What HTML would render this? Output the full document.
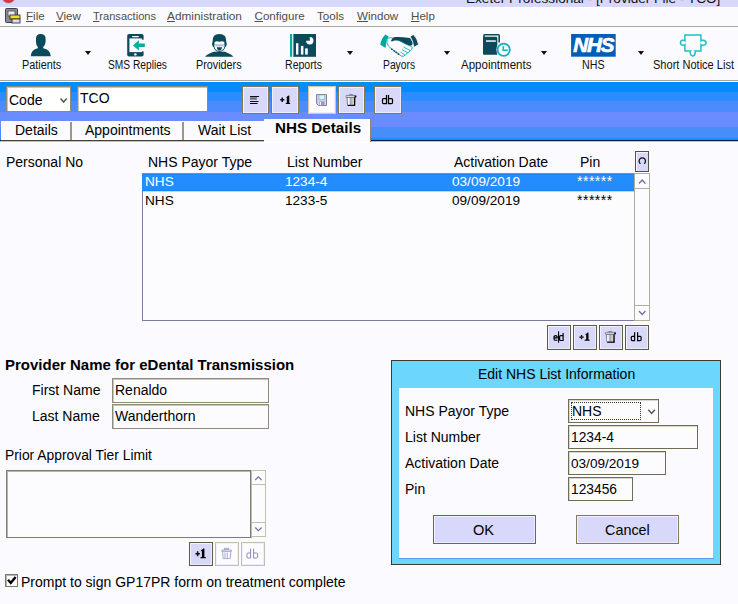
<!DOCTYPE html>
<html><head><meta charset="utf-8">
<style>
*{box-sizing:border-box}
html,body{margin:0;padding:0}
body{width:738px;height:604px;overflow:hidden;position:relative;background:#FAFAFF;font-family:"Liberation Sans",sans-serif;color:#000}
.a{position:absolute}
.t{position:absolute;white-space:nowrap;font-size:14px;line-height:14px}
.m{position:absolute;white-space:nowrap;font-size:11.6px;line-height:11px;color:#505044}
.m u{text-decoration:underline;text-underline-offset:1px;text-decoration-thickness:1px}
.lbl{position:absolute;white-space:nowrap;font-size:12px;line-height:12px;color:#111}
.tri{position:absolute;width:0;height:0;border-left:3.5px solid transparent;border-right:3.5px solid transparent;border-top:4px solid #111}
.btn{position:absolute;background:#D8D8FA;border:1px solid #857A58;box-shadow:inset 1px 1px 0 #F0F0FF,inset -1px -1px 0 #ECECFF}
.fld{position:absolute;background:#FCFCFF;border:1px solid #8E8C78;box-shadow:inset 1px 1px 0 #C8C6B8}
</style></head><body>

<!-- title bar -->
<div class="a" style="left:0;top:0;width:738px;height:7px;background:#D8D8FE"></div><div class="a" style="left:0;top:7px;width:738px;height:1px;background:#FFFFFF"></div>
<div class="a" style="left:2px;top:-10px;width:13px;height:13px;border-radius:50%;background:#D83838;box-shadow:0 0 0 0.8px #A0C8D0"></div>
<div class="a" style="left:0;top:0;width:738px;height:7px;overflow:hidden"><div class="t" style="left:466px;top:-8px;font-size:13.6px;line-height:13.6px;color:#111">Exeter Professional - [Provider File - TCO]</div></div>

<!-- menu bar -->
<div class="a" style="left:0;top:26px;width:738px;height:1px;background:#A8A898"></div>
<div class="m" style="left:26px;top:10px"><u>F</u>ile</div>
<div class="m" style="left:56px;top:10px"><u>V</u>iew</div>
<div class="m" style="left:92.5px;top:10px;transform:scaleX(0.955);transform-origin:0 0"><u>T</u>ransactions</div>
<div class="m" style="left:167px;top:10px;transform:scaleX(1.02);transform-origin:0 0"><u>A</u>dministration</div>
<div class="m" style="left:254.5px;top:10px"><u>C</u>onfigure</div>
<div class="m" style="left:317px;top:10px">T<u>o</u>ols</div>
<div class="m" style="left:357px;top:10px"><u>W</u>indow</div>
<div class="m" style="left:411px;top:10px"><u>H</u>elp</div>

<!-- toolbar labels -->
<div class="lbl" style="left:22px;top:59px;transform:scaleX(0.905);transform-origin:0 0">Patients</div>
<div class="lbl" style="left:108px;top:59px;transform:scaleX(0.85);transform-origin:0 0">SMS Replies</div>
<div class="lbl" style="left:196px;top:59px;transform:scaleX(0.9);transform-origin:0 0">Providers</div>
<div class="lbl" style="left:285px;top:59px;transform:scaleX(0.88);transform-origin:0 0">Reports</div>
<div class="lbl" style="left:383px;top:59px;transform:scaleX(0.86);transform-origin:0 0">Payors</div>
<div class="lbl" style="left:461px;top:59px;transform:scaleX(0.96);transform-origin:0 0">Appointments</div>
<div class="lbl" style="left:582px;top:59px;transform:scaleX(0.89);transform-origin:0 0">NHS</div>
<div class="lbl" style="left:653px;top:59px;transform:scaleX(0.92);transform-origin:0 0">Short Notice List</div>
<div class="tri" style="left:85px;top:51px"></div>
<div class="tri" style="left:347px;top:51px"></div>
<div class="tri" style="left:444px;top:51px"></div>
<div class="tri" style="left:541px;top:51px"></div>
<div class="tri" style="left:638px;top:51px"></div>

<div class="a" style="left:0;top:80px;width:738px;height:1px;background:#A8A898"></div>

<!-- blue band -->
<div class="a" style="left:0;top:82px;width:738px;height:58px;background:linear-gradient(#008CFF 0,#008CFF 10px,#2A8CFF 10px,#2A8CFF 19px,#4A8CFC 19px,#4A8CFC 30px,#6B8CFF 30px,#6B8CFF 45px,#478EFC 45px,#478EFC 56px,#1A8CFF 56px,#1A8CFF 58px)"></div>
<div class="a" style="left:0;top:140px;width:738px;height:1px;background:#081838"></div><div class="a" style="left:0;top:141px;width:738px;height:1px;background:#C4C0B4"></div><div class="a" style="left:0;top:142px;width:738px;height:1px;background:#FFFFFF"></div>

<!-- code combo -->
<div class="fld" style="left:6px;top:86px;width:65px;height:26px;background:#fff"></div>
<div class="t" style="left:9px;top:93px">Code</div>
<div class="fld" style="left:77px;top:86px;width:131px;height:26px;background:#fff"></div>
<div class="t" style="left:80px;top:91px">TCO</div>

<div class="btn" style="left:242px;top:86px;width:27px;height:28px"></div>
<div class="btn" style="left:271px;top:86px;width:28px;height:28px"></div>
<div class="btn" style="left:308px;top:86px;width:28px;height:28px;background:#FCFCFF;border-color:#D8C8A8"></div>
<div class="btn" style="left:338px;top:86px;width:27px;height:28px"></div>
<div class="btn" style="left:374px;top:86px;width:28px;height:28px"></div>

<!-- tabs -->
<div class="a" style="left:1px;top:121px;width:264px;height:20px;background:#FAFAFF;border-bottom:1px solid #404040;box-shadow:inset 0 -1px 0 #fff"></div>
<div class="a" style="left:70px;top:122px;width:2px;height:18px;background:#9A9A84"></div>
<div class="a" style="left:182px;top:122px;width:2px;height:18px;background:#9A9A84"></div>
<div class="t" style="left:15px;top:123px">Details</div>
<div class="t" style="left:85px;top:123px">Appointments</div>
<div class="t" style="left:198px;top:123px">Wait List</div>
<div class="a" style="left:264px;top:119px;width:107px;height:23px;background:#FAFAFF;border-right:1px solid #8A8670"></div>
<div class="t" style="left:275px;top:120px;font-weight:bold;font-size:15.2px;line-height:15px">NHS Details</div>

<!-- content -->
<div class="t" style="left:6px;top:155px">Personal No</div>
<div class="t" style="left:148px;top:155px">NHS Payor Type</div>
<div class="t" style="left:287px;top:155px">List Number</div>
<div class="t" style="left:454px;top:155px">Activation Date</div>
<div class="t" style="left:580px;top:155px">Pin</div>
<div class="btn" style="left:635px;top:151px;width:14px;height:21px;border-color:#55543C;box-shadow:inset 1px 1px 0 #F4F4FF"></div>

<div class="a" style="left:142px;top:173px;width:493px;height:148px;border:1px solid #7C7CA0;border-top-color:#8A8A98;border-right:none;background:#FCFCFF"></div>
<div class="a" style="left:142px;top:174px;width:492px;height:17px;background:#238DFF;border-top:1px solid #1888FA;border-bottom:1px solid #1484F6"></div><div class="a" style="left:143px;top:191px;width:491px;height:1px;background:#B8D8FF"></div>
<div class="t" style="font-size:13.6px;left:145px;top:175px;color:#fff">NHS</div>
<div class="t" style="font-size:13.6px;left:285px;top:175px;color:#fff">1234-4</div>
<div class="t" style="font-size:13.6px;left:452px;top:175px;color:#fff">03/09/2019</div>
<div class="t" style="left:577px;top:174px;color:#fff;font-size:14px;letter-spacing:0.5px">******</div>
<div class="t" style="font-size:13.6px;left:145px;top:194px">NHS</div>
<div class="t" style="font-size:13.6px;left:285px;top:194px">1233-5</div>
<div class="t" style="font-size:13.6px;left:452px;top:194px">09/09/2019</div>
<div class="t" style="left:577px;top:193px;font-size:14px;letter-spacing:0.5px">******</div>
<div class="a" style="left:634px;top:173px;width:16px;height:148px;border:1px solid #B0AE9C;background:#FCFCFF"></div><div class="a" style="left:635px;top:188px;width:14px;height:1px;background:#B0AE9C"></div><div class="a" style="left:635px;top:305px;width:14px;height:1px;background:#B0AE9C"></div>

<div class="btn" style="left:547px;top:325px;width:24px;height:25px;border-color:#5E5C44"></div>
<div class="btn" style="left:573px;top:325px;width:24px;height:25px;border-color:#5E5C44"></div>
<div class="btn" style="left:599px;top:325px;width:24px;height:25px;border-color:#5E5C44"></div>
<div class="btn" style="left:625px;top:325px;width:24px;height:25px;border-color:#5E5C44"></div>

<div class="t" style="left:5px;top:357px;font-weight:bold;font-size:15px;line-height:15px">Provider Name for eDental Transmission</div>
<div class="t" style="left:32px;top:383px">First Name</div>
<div class="t" style="left:32px;top:409px">Last Name</div>
<div class="fld" style="left:112px;top:378px;width:157px;height:25px"></div>
<div class="fld" style="left:112px;top:404px;width:157px;height:25px"></div>
<div class="t" style="left:115px;top:383px">Renaldo</div>
<div class="t" style="left:115px;top:409px">Wanderthorn</div>

<div class="t" style="left:5px;top:448px;font-size:13.85px">Prior Approval Tier Limit</div>
<div class="fld" style="left:6px;top:470px;width:245px;height:68px;border-color:#7E7E6C;box-shadow:inset 1px 1px 0 #B8B8A8,1px 0 0 #A8A898"></div>
<div class="a" style="left:251px;top:470px;width:15px;height:67px;border:1px solid #C0BEAE;background:#FCFCFF"></div><div class="a" style="left:252px;top:484px;width:13px;height:1px;background:#C0BEAE"></div><div class="a" style="left:252px;top:522px;width:13px;height:1px;background:#C0BEAE"></div>
<div class="btn" style="left:189px;top:542px;width:24px;height:24px;border-color:#5E5C44"></div>
<div class="btn" style="left:215px;top:542px;width:24px;height:24px;background:#FCFCFF;border-color:#C0C0B0"></div>
<div class="btn" style="left:241px;top:542px;width:24px;height:24px;background:#FCFCFF;border-color:#C0C0B0"></div>

<div class="a" style="left:5px;top:574px;width:13px;height:13px;border:1px solid #7A7A6A;box-shadow:inset 1px 1px 0 #B8B8A8;background:#FCFCFF"></div>
<div class="t" style="left:21px;top:575px;font-size:14px">Prompt to sign GP17PR form on treatment complete</div>

<!-- dialog -->
<div class="a" style="left:391px;top:360px;width:330px;height:205px;background:#6DD6FD;border:1px solid #3A3A2A"></div>
<div class="a" style="left:399px;top:388px;width:314px;height:170px;background:#FAFAFF;box-shadow:0 -1px 0 #90C8FF"></div><div class="a" style="left:399px;top:558px;width:315px;height:1px;background:#5A9CF8"></div>
<div class="t" style="left:478px;top:367px">Edit NHS List Information</div>
<div class="t" style="left:405px;top:404px">NHS Payor Type</div>
<div class="t" style="left:405px;top:430px">List Number</div>
<div class="t" style="left:405px;top:456px">Activation Date</div>
<div class="t" style="left:405px;top:482px">Pin</div>
<div class="fld" style="left:568px;top:399px;width:91px;height:24px;border-color:#6E6C54;box-shadow:inset 1px 1px 0 #D8D8D0"></div>
<div class="t" style="left:572px;top:404px">NHS</div><div class="a" style="left:571px;top:402px;width:70px;height:18px;border:1px dotted #333"></div>
<div class="fld" style="left:568px;top:425px;width:130px;height:24px;border-color:#6E6C54;box-shadow:inset 1px 1px 0 #D8D8D0"></div>
<div class="t" style="left:571px;top:431px;font-size:13.8px">1234-4</div>
<div class="fld" style="left:568px;top:451px;width:98px;height:24px;border-color:#6E6C54;box-shadow:inset 1px 1px 0 #D8D8D0"></div>
<div class="t" style="left:571px;top:457px;font-size:13.6px">03/09/2019</div>
<div class="fld" style="left:568px;top:477px;width:65px;height:24px;border-color:#6E6C54;box-shadow:inset 1px 1px 0 #D8D8D0"></div>
<div class="t" style="left:571px;top:483px;font-size:13.8px">123456</div>
<div class="btn" style="left:433px;top:515px;width:103px;height:29px;border-color:#3A6AB8"></div>
<div class="btn" style="left:576px;top:515px;width:103px;height:29px"></div>
<div class="t" style="left:473px;top:523px;font-size:14.6px">OK</div>
<div class="t" style="left:605px;top:523px;font-size:14.4px">Cancel</div>


<svg class="a" style="left:0;top:0" width="738" height="604" viewBox="0 0 738 604">
<!-- menu icon -->
<g>
<rect x="5.5" y="8.5" width="12" height="14" rx="1" fill="#8A8A98" stroke="#404040" stroke-width="1"/>
<rect x="8" y="11" width="7" height="5" fill="#E8E8F0" stroke="#505050" stroke-width="0.8"/>
<rect x="10" y="15" width="10" height="4" fill="#F0E020" stroke="#202020" stroke-width="0.8"/>
<rect x="12" y="19" width="8" height="4" fill="#E0E0E8" stroke="#202020" stroke-width="0.8"/>
</g>
<!-- patients -->
<path fill="#0A4A5A" d="M36,38.5 Q36,34 40.5,34 Q45.6,34 45.6,38.5 L45.6,42 Q45.2,45.5 43.2,47 L43.2,48.3 Q50.5,49.8 50.8,56.3 L30.7,56.3 Q31,49.8 37.8,48.3 L37.8,47 Q36,45.5 36,42 Z"/>
<!-- sms -->
<rect x="127.2" y="34" width="16.4" height="22.6" rx="1.8" fill="#0B4A5A"/>
<rect x="129.4" y="38.4" width="12.5" height="13.7" fill="#FAFAFF"/>
<rect x="141" y="39.7" width="3" height="11.7" fill="#FAFAFF"/>
<rect x="132" y="36" width="7" height="1.2" rx="0.6" fill="#FAFAFF"/>
<circle cx="135.4" cy="54.4" r="1.2" fill="#FAFAFF"/>
<path fill="#00B0A4" d="M132.9,45.4 L138.9,40.2 L138.9,43.4 L144.8,43.4 L144.8,47.1 L138.9,47.1 L138.9,50.6 Z"/>
<!-- providers -->
<path fill="#0B4A5A" d="M205.1,56.8 Q206,55 213.5,51.8 L225,51.8 Q232.5,55 233.3,56.8 Z"/>
<path fill="#0B4A5A" d="M212.6,41.5 Q212.3,34.1 219.4,34.1 Q226.6,34.1 226.2,41.5 L226.8,44 Q226.6,46.5 225.3,47 Q224,51.6 219.4,52 Q214.8,51.6 213.5,47 Q212.2,46.5 212,44 Z"/>
<path fill="#FAFAFF" d="M214.6,42 Q216.5,40.5 219.4,41.7 Q222.3,40.5 224.3,42 L224.5,46.5 Q223.5,50.8 219.4,51 Q215.3,50.8 214.3,46.5 Z"/>
<path fill="#9FB8D0" d="M215,44.2 L224,44.2 L223.8,46.5 L215.2,46.5 Z" opacity="0.8"/>
<path fill="#0B4A5A" d="M216.8,47.2 L222,47.2 Q221.6,50.6 219.4,50.6 Q217.2,50.6 216.8,47.2 Z"/>
<!-- reports -->
<rect x="290" y="34" width="2.2" height="22.8" fill="#00B0A4"/>
<rect x="293.4" y="34" width="22.6" height="22.8" fill="#0B4A5A"/>
<rect x="296" y="43.2" width="2.4" height="11.4" fill="#FAFAFF"/>
<rect x="300.9" y="45.9" width="2.5" height="8.7" fill="#FAFAFF"/>
<rect x="305.1" y="48.4" width="2.7" height="6.2" fill="#FAFAFF"/>
<path fill="#FAFAFF" d="M309.8,37 A3.7,3.7 0 1 1 306.1,40.7 L309.8,40.7 Z"/>
<!-- payors handshake -->
<path fill="#00A89C" d="M380.3,44.8 Q381.3,38.5 385.4,34.6 L388.6,36.4 Q385.6,41.5 385.6,47.9 Z"/>
<path fill="#FAFAFF" stroke="#18B8C0" stroke-width="1" d="M387,38.6 Q389.5,37.5 392,37.8 L397,39.5 L404.5,43.5 L411.5,46.5 Q412.8,48 411.6,49.3 L405.5,54.8 Q403.5,56.8 401.5,56.2 L399.5,54.8 L391,48.5 Q387.5,46 387,43 Z"/>
<path fill="#0B4A5A" d="M410.2,38 L403,37.2 Q398,36.8 395,37.1 Q392.5,37.6 391,40.4 Q391.3,41.6 392,41.4 Q393.5,40.6 395,40.5 L398.5,40.5 Q402,41.5 404.7,43.4 L409.9,45.8 Q411.8,45.8 413.4,43.6 Z"/>
<path fill="#0B4A5A" stroke="#FAFAFF" stroke-width="0.9" d="M418.6,44.6 Q417.6,38.5 413.4,34.4 L410.2,36.4 Q413.2,41.5 413.8,47.4 Z"/>
<path fill="none" stroke="#0B4A5A" stroke-width="1.6" d="M391.2,48.9 L392.6,49.6 M393.5,50.4 L394.9,51.3 M395.7,52 L397.1,52.9 M397.9,53.6 L399.2,54.6"/>
<path fill="none" stroke="#18B8C0" stroke-width="0.9" d="M403.5,47 L410,50.5 M402,49.5 L408,53 M400.5,52 L405,55"/>
<!-- appointments -->
<path fill="none" stroke="#0B4A5A" stroke-width="1.6" d="M484,37 L484,35.2 Q484,34.7 485,34.7 L498.2,34.7 Q499.2,34.7 499.2,35.7 L499.2,42.5"/>
<path fill="#0B4A5A" d="M483,36.7 L496,36.7 Q497.3,36.7 497.3,38 L497.3,54.7 L484,54.7 Q483,54.7 483,53.7 Z"/>
<rect x="486" y="40.3" width="9.8" height="1.5" fill="#FAFAFF"/>
<circle cx="503.7" cy="49.8" r="7.4" fill="#FAFAFF"/>
<circle cx="503.7" cy="49.8" r="6.1" fill="#FAFAFF" stroke="#10B0C0" stroke-width="1.8"/>
<path fill="none" stroke="#10B0C0" stroke-width="1.4" d="M503.2,46 L503.2,50.2 L507.8,50.2"/>
<!-- NHS -->
<rect x="571.1" y="34" width="44.6" height="22.7" fill="#005EB8"/>
<text x="573.3" y="52.3" font-family="Liberation Sans" font-weight="bold" font-style="italic" font-size="20.5" fill="#fff" stroke="#fff" stroke-width="0.7" letter-spacing="-1.1">NHS</text>
<!-- puzzle -->
<path fill="none" stroke="#20C0C8" stroke-width="1.5" d="M684.9,35 L700.9,35 L700.9,40.6 Q701.5,40 703.5,40.2 Q706.3,40.8 706.2,42.8 Q706,45 703.5,45.2 Q701.5,45.3 700.9,44.7 L700.9,50.9 L695,50.9 Q695.4,51.5 695.2,53 Q694.6,56 692.7,55.9 Q690.6,55.9 690.3,53 Q690.1,51.5 690.5,50.9 L684.9,50.9 L684.9,44.7 Q684.3,45.3 682.5,45.2 Q680.5,45 680.5,42.8 Q680.5,40.5 682.5,40.2 Q684.3,40 684.9,40.6 Z"/>

<!-- band button icons -->
<rect x="250" y="96" width="9" height="1" fill="#111"/>
<rect x="250" y="97" width="7" height="3" fill="#8A8AA0"/>
<rect x="250" y="98" width="6" height="1" fill="#6A6A80"/>
<rect x="250" y="101" width="8.5" height="1" fill="#111"/>
<rect x="250" y="103" width="7.5" height="1" fill="#000"/>
<path fill="#111" d="M280.2,99 H284.4 V100.6 H280.2 Z M281.5,97.5 H283 V102 H281.5 Z"/>
<path fill="#000" d="M286.9,96.8 L288.6,95.4 L289.3,95.4 L289.3,102.8 L290.2,103.2 L290.2,104 L285.8,104 L285.8,103.2 L286.8,102.8 L286.8,97.6 L285.9,97.9 Z"/>
<g>
<path d="M316.5,94.5 L326.5,94.5 L326.5,105.5 L318.5,105.5 L316.5,103.5 Z" fill="#CCCCEC" stroke="#8484A4" stroke-width="1"/>
<rect x="319" y="95" width="5.4" height="4.5" fill="#D0F6F8" stroke="#9898B0" stroke-width="0.5"/>
<rect x="319.6" y="101.5" width="4.8" height="3.8" fill="#9898B0"/>
<rect x="320" y="102" width="1" height="3" fill="#F4F4FF"/>
</g>
<g>
<path d="M349.6,95.6 V94.4 H352.6 V95.6" fill="none" stroke="#7A7A90" stroke-width="0.9"/>
<rect x="346" y="95.5" width="10" height="2" rx="0.5" fill="#E4E4EC" stroke="#505060" stroke-width="0.6"/>
<rect x="354.6" y="95.6" width="1.6" height="1.8" fill="#000"/>
<path d="M347,97.4 L355,97.4 L354.6,105.4 L347.6,105.4 Z" fill="#D4D4DC" stroke="#606070" stroke-width="0.7"/>
<rect x="348" y="98" width="1.2" height="6.8" fill="#FFFFFF"/>
<rect x="350.2" y="98" width="1.4" height="6.8" fill="#9C9CB8"/>
<rect x="352.2" y="98" width="1" height="6.8" fill="#C0C0B0"/>
<rect x="354" y="97.4" width="1.2" height="8.2" fill="#000"/>
<rect x="347.8" y="104.8" width="7.2" height="1.1" fill="#000"/>
</g>
<path d="M386.5,95 V103.5 H383.5 Q382.5,103.5 382.5,102.5 V99.5 Q382.5,98.5 383.5,98.5 H386.5 M388.5,95 V103.5 H391.5 Q392.5,103.5 392.5,102.5 V99.5 Q392.5,98.5 391.5,98.5 H388.5" stroke="#000" stroke-width="1.25" fill="none"/>
<!-- combo chevron -->
<path d="M60.5,98.5 L63.6,102 L66.7,98.5" fill="none" stroke="#5A5A44" stroke-width="1.5"/>
<!-- refresh button glyph -->
<path d="M640.46,163.8 A3.2,3.3 0 1 1 644.14,163.8" fill="none" stroke="#111" stroke-width="1.3"/>
<!-- scroll arrows list -->
<path d="M639,183.5 L642.2,180 L645.4,183.5" fill="none" stroke="#7070A0" stroke-width="1.3"/>
<path d="M639,311 L642.2,314.5 L645.4,311" fill="none" stroke="#7070A0" stroke-width="1.3"/>
<!-- list buttons icons -->
<path d="M554.2,337.9 H557.3 Q557.3,335.6 555.7,335.6 Q553.9,335.6 553.9,337.9 Q553.9,340.3 555.8,340.3 Q556.8,340.3 557.3,339.8" fill="none" stroke="#000" stroke-width="1.1"/>
<path d="M563.1,333 V340.5 H560.6 Q559.6,340.5 559.6,339.5 V336.6 Q559.6,335.6 560.6,335.6 H563.1" fill="none" stroke="#000" stroke-width="1.2"/>
<rect x="558" y="331.3" width="1.1" height="11.4" fill="#000"/>
<path fill="#111" d="M579.3,336.5 H583.8 V337.8 H579.3 Z M580.9,335 H582.2 V339.2 H580.9 Z"/>
<path fill="#000" d="M586.2,333.8 L587.6,332.5 L588.5,332.5 L588.5,339.6 L589.6,339.8 L589.6,340.7 L584.6,340.7 L584.6,339.8 L586.2,339.6 L586.2,334.8 L584.8,335.2 Z"/>
<g>
<path d="M608.8,332.5 V331.5 H611.8 V332.5" fill="none" stroke="#7A7A90" stroke-width="0.9"/>
<rect x="605.4" y="332.4" width="10" height="2" rx="0.5" fill="#E4E4EC" stroke="#505060" stroke-width="0.6"/>
<rect x="614.2" y="332.5" width="1.6" height="1.8" fill="#000"/>
<path d="M606.3,334.4 L614.4,334.4 L614,342.2 L607,342.2 Z" fill="#D4D4DC" stroke="#606070" stroke-width="0.7"/>
<rect x="607.3" y="335" width="1.2" height="6.6" fill="#FFFFFF"/>
<rect x="609.5" y="335" width="1.3" height="6.6" fill="#9C9CB8"/>
<rect x="611.4" y="335" width="1" height="6.6" fill="#C0C0B0"/>
<rect x="613.4" y="334.4" width="1.2" height="8.2" fill="#000"/>
<rect x="607.2" y="341.6" width="7.2" height="1.1" fill="#000"/>
</g>
<path d="M634.6,332.2 V340.6 H632.2 Q631.3,340.6 631.3,339.6 V337.3 Q631.3,336.4 632.2,336.4 H634.6 M637.6,332.2 V340.6 H640.2 Q641.1,340.6 641.1,339.6 V337.3 Q641.1,336.4 640.2,336.4 H637.6" stroke="#000" stroke-width="1.2" fill="none"/>
<!-- prior approval scroll arrows -->
<path d="M255.2,480 L258.4,476.8 L261.6,480" fill="none" stroke="#7070A0" stroke-width="1.1"/>
<path d="M255.2,527.5 L258.4,530.7 L261.6,527.5" fill="none" stroke="#7070A0" stroke-width="1.1"/>
<path fill="#111" d="M195.4,553.1 H199.9 V554.6 H195.4 Z M196.9,551.3 H198.4 V556.3 H196.9 Z"/>
<path fill="#000" d="M201.5,549.9 L203.4,548.6 L204.4,548.6 L204.4,557 L205.9,557.3 L205.9,558.2 L200.4,558.2 L200.4,557.3 L201.9,557 L201.9,551.1 L200.5,551.4 Z"/>
<g fill="none" stroke="#A8A8D0" stroke-width="1">
<rect x="224.5" y="548.3" width="4" height="1.2"/>
<path d="M221.8,550 H231.4 V551.4 H221.8 Z"/>
<path d="M222.6,551.4 L223.2,558.6 H230.2 L230.8,551.4"/>
<path d="M225,552.5 V557.8 M227.3,552.5 V557.8"/>
</g>
<path d="M250.6,548.6 V558 H248 Q247,558 247,557 V554 Q247,553 248,553 H250.6 M253.6,548.6 V558 H256.6 Q257.6,558 257.6,557 V554 Q257.6,553 256.6,553 H253.6" stroke="#8A8AB8" stroke-width="1" fill="none"/>
<!-- checkbox check -->
<path d="M8,579.8 L10.8,583 L15.6,577" fill="none" stroke="#000" stroke-width="2.4"/>
<!-- dialog combo chevron -->
<path d="M648.3,409.8 L651.6,413.4 L654.9,409.8" fill="none" stroke="#5A5A44" stroke-width="1.5"/>


</svg>

</body></html>
